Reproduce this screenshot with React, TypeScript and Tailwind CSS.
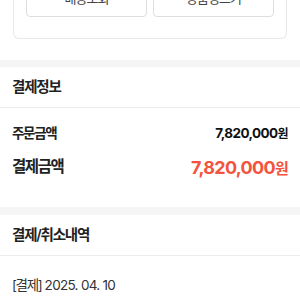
const FONT = { fontFamily: 'Inter, "Noto Sans CJK KR", sans-serif' };

function SectionHeader({ title }: { readonly title: string }) {
  return (
    <div className="h-[41px] flex items-center px-[12px] border-b border-[#ececec]">
      <span className="text-[14.5px] font-semibold text-[#222] tracking-[-1.2px]">{title}</span>
    </div>
  );
}

export default function App() {
  return (
    <div className="w-[300px] h-[300px] overflow-hidden bg-white" style={FONT}>
      <div className="px-[13px] pb-[21px]">
        <div className="border border-[#e8e8e8] border-t-0 rounded-b-[6px] px-[12px] pb-[21px]">
          <div className="flex gap-[6px] -mt-[19px]">
            <button className="flex-1 h-[36px] border border-[#dedede] rounded-[4px] text-[13px] text-[#444] tracking-[-1px]">
              배송조회
            </button>
            <button className="flex-1 h-[36px] border border-[#dedede] rounded-[4px] text-[13px] text-[#444] tracking-[-1px]">
              상품평쓰기
            </button>
          </div>
        </div>
      </div>

      <div className="h-[7px] bg-[#f5f5f5]" />

      <SectionHeader title="결제정보" />
      <div className="px-[12px] pt-[14px] pb-[27px]">
        <div className="flex items-center justify-between h-[22px]">
          <span className="text-[13.5px] font-semibold text-[#222] tracking-[-1.3px]">주문금액</span>
          <span className="text-[13.5px] font-bold text-[#111] tracking-[-0.6px]">
            7,820,000<span className="text-[12px] font-semibold">원</span>
          </span>
        </div>
        <div className="flex items-center justify-between h-[26px] mt-[10px]">
          <span className="text-[15.5px] font-bold text-[#222] tracking-[-1.4px]">결제금액</span>
          <span className="text-[18px] font-bold text-[#f4533d] tracking-[-0.7px]">
            7,820,000<span className="text-[15px]">원</span>
          </span>
        </div>
      </div>

      <div className="h-[8px] bg-[#f5f5f5]" />

      <SectionHeader title="결제/취소내역" />
      <div className="px-[12px] pt-[16px]">
        <span className="text-[13.5px] text-[#333] tracking-[-0.7px]">
          <span className="tracking-[-1.3px]">[결제]</span> 2025. 04. 10
        </span>
      </div>
    </div>
  );
}
